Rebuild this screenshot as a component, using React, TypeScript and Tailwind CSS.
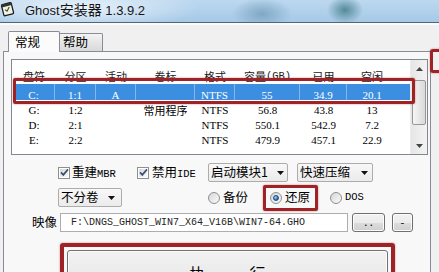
import React from 'react';
import clsx from 'clsx';

const cjk = "font-['Noto_Sans_CJK_SC',sans-serif]";
const mono = "font-['Liberation_Mono',monospace]";
const serif = "font-['Liberation_Serif','Noto_Sans_CJK_SC',serif]";
const winBtn =
  'rounded-[3px] border border-[#707070] bg-[linear-gradient(to_bottom,#f2f2f2_0%,#ebebeb_50%,#dddddd_51%,#cfcfcf_100%)] shadow-[inset_0_0_0_1px_#fcfcfc]';
const redBox = 'border-[#9d2327] shadow-[0_0_2px_rgba(157,35,39,0.6)]';

const columns = [
  { title: '盘符', w: 'w-[42px]' },
  { title: '分区', w: 'w-[41px]' },
  { title: '活动', w: 'w-[40px]' },
  { title: '卷标', w: 'w-[59px]' },
  { title: '格式', w: 'w-[40px]' },
  { title: '容量', sub: '(GB)', w: 'w-[65px]' },
  { title: '已用', w: 'w-[47px]' },
  { title: '空闲', w: 'w-[50px]' },
];

const rows = [
  ['C:', '1:1', 'A', '', 'NTFS', '55', '34.9', '20.1'],
  ['G:', '1:2', '', '常用程序', 'NTFS', '56.8', '43.8', '13'],
  ['D:', '2:1', '', '', 'NTFS', '550.1', '542.9', '7.2'],
  ['E:', '2:2', '', '', 'NTFS', '479.9', '457.1', '22.9'],
];

function AppIcon() {
  return (
    <svg width="15" height="16" viewBox="0 0 15 16" className="shrink-0">
      <g transform="rotate(-14 7.5 8)">
        <rect x="2.5" y="2.5" width="10" height="11.5" rx="1.2" fill="#f3f1e4" stroke="#1b1b1b" strokeWidth="1.3" />
        <rect x="2.5" y="2.5" width="10" height="2.6" fill="#333" />
        <path d="M5 8.2l1.6 1.8 3-3.6" fill="none" stroke="#2f5b34" strokeWidth="1.2" />
      </g>
    </svg>
  );
}

function Check() {
  return (
    <span className="relative flex h-[12px] w-[12px] shrink-0 items-center justify-center border border-[#8e8f8f] bg-white">
      <span className="absolute inset-[1px] bg-gradient-to-br from-[#d8d8d8] to-[#fbfbfb]" />
      <svg className="relative" width="9" height="9" viewBox="0 0 9 9">
        <path d="M1 4.4l2.3 2.5L8 1.4" fill="none" stroke="#3d4f74" strokeWidth="1.7" />
      </svg>
    </span>
  );
}

function Radio({ checked = false }: { checked?: boolean }) {
  return (
    <span className="flex h-[12px] w-[12px] shrink-0 items-center justify-center rounded-full border border-[#8e8f8f] bg-gradient-to-br from-[#d6d6d6] to-[#fbfbfb]">
      {checked && (
        <span className="h-[6px] w-[6px] rounded-full border border-[#1b4f8a] bg-[radial-gradient(circle_at_35%_35%,#a6d6ff,#1d5fa3_75%)]" />
      )}
    </span>
  );
}

function Combo({ label, className }: { label: string; className: string }) {
  return (
    <div
      className={clsx(
        'flex h-[19px] items-center justify-between rounded-[2px] border border-[#acacac] bg-gradient-to-b from-[#f8f8f8] to-[#ebebeb] pl-[2px]',
        className,
      )}
    >
      <span className="leading-none">{label}</span>
      <svg width="7" height="4" viewBox="0 0 7 4">
        <path d="M0 0h7L3.5 4z" fill="#111" />
      </svg>
    </div>
  );
}

function ScrollBar() {
  return (
    <div className="flex w-[17px] flex-col border-l border-[#ececec] bg-gradient-to-r from-[#e6e6e6] to-[#f3f3f3]">
      <div className="flex h-[17px] items-center justify-center">
        <svg width="7" height="4" viewBox="0 0 7 4">
          <path d="M0 4h7L3.5 0z" fill="#444" />
        </svg>
      </div>
      <div className="flex-1 px-[1px] pt-[3px]">
        <div className="h-[45px] rounded-[2px] border border-[#979797] bg-gradient-to-r from-[#f6f6f6] to-[#d9d9d9]" />
      </div>
      <div className="flex h-[17px] items-center justify-center">
        <svg width="7" height="4" viewBox="0 0 7 4">
          <path d="M0 0h7L3.5 4z" fill="#444" />
        </svg>
      </div>
    </div>
  );
}

function ListView() {
  return (
    <div className="relative ml-[7px] mt-[7px] flex h-[96px] w-[417px] border border-[#828790] bg-white">
      <div className="flex w-[398px] flex-col pl-[1px]">
        <div className={clsx('flex h-[24px] items-end pb-[2px] text-[11px] text-[#1a1a1a]', cjk)}>
          {columns.map((c) => (
            <div key={c.title} className={clsx('flex justify-center leading-[11px]', c.w)}>
              {c.title}
              {c.sub && <span className={clsx('text-[10.5px]', mono)}>{c.sub}</span>}
            </div>
          ))}
        </div>
        {rows.map((r, i) => (
          <div
            key={r[0]}
            className={clsx(
              'flex text-[11px] leading-[11px]',
              i === 0 ? 'h-[16px] bg-[#3c8fe0] pt-[6px] text-white' : 'h-[15px] pt-[5px] text-black',
            )}
          >
            {r.map((cell, j) => (
              <div
                key={j}
                className={clsx(
                  'flex justify-center',
                  columns[j].w,
                  /[\u4e00-\u9fff]/.test(cell) ? cjk : serif,
                  i === 0 && j < 7 && '-mt-[6px] border-r border-[#82b7ec] pt-[6px]',
                )}
              >
                {cell}
              </div>
            ))}
          </div>
        ))}
      </div>
      <div className="flex-1" />
      <ScrollBar />
      <div className={clsx('absolute left-[1px] top-[18px] h-[26px] w-[402px] rounded-[2px] border-[3px]', redBox)} />
    </div>
  );
}

function TitleBar() {
  return (
    <div className="flex h-[22px] items-start bg-[radial-gradient(ellipse_120px_22px_at_80px_8px,rgba(236,244,251,0.95),rgba(236,244,251,0)),radial-gradient(ellipse_30px_16px_at_262px_14px,#80a8c5,rgba(128,168,197,0)),radial-gradient(ellipse_18px_14px_at_345px_10px,#548a98,rgba(84,138,152,0)),linear-gradient(to_bottom,#bcd8ef,#a6c9e7)] pt-[1px]">
      <AppIcon />
      <div className="ml-[10px] mt-[1px] font-['Liberation_Sans','Noto_Sans_CJK_SC',sans-serif] text-[13px] leading-[14px] text-[#151515]">
        Ghost<span className={clsx('text-[14px] leading-[14px]', cjk)}>安装器</span> 1.3.9.2
      </div>
    </div>
  );
}

export default function App() {
  return (
    <div className={clsx('relative h-[272px] w-[439px] overflow-hidden bg-[#f0f0f0] text-black', cjk)}>
      <TitleBar />
      <div className="h-[1px] bg-[#52657a]" />
      <div className="h-[2px] bg-[#fbfbfb]" />

      <div className="relative z-10 mt-[6px] flex h-[21px] items-end pl-[8px] text-[12.5px] leading-none">
        <div className="flex h-[21px] w-[52px] items-center rounded-t-[2px] border border-b-0 border-[#898c95] bg-[#fbfbfb] pl-[6px]">
          常规
        </div>
        <div className="mb-[1px] flex h-[18px] w-[43px] items-center rounded-tr-[2px] border border-b-0 border-l-0 border-[#898c95] bg-gradient-to-b from-[#f3f3f3] to-[#d9d9d9] pl-[3px]">
          帮助
        </div>
      </div>

      <div className="-mt-[1px] ml-[3px] h-[240px] w-[428px] border border-[#898c95] bg-[#f8f8f8] text-[12.5px]">
        <ListView />

        <div className="ml-[54px] mt-[8px] flex h-[19px] items-center">
          <div className="flex w-[79px] items-center">
            <Check />
            <span className="ml-[2px] leading-none">
              重建<span className={clsx('text-[10.5px]', mono)}>MBR</span>
            </span>
          </div>
          <div className="flex w-[71px] items-center">
            <Check />
            <span className="ml-[3px] leading-none">
              禁用<span className={clsx('text-[10.5px]', mono)}>IDE</span>
            </span>
          </div>
          <Combo label="启动模块1" className="w-[80px] pr-[3px]" />
          <Combo label="快速压缩" className="ml-[9px] w-[76px] pr-[4px]" />
        </div>

        <div className="ml-[54px] mt-[6px] flex h-[19px] items-center">
          <Combo label="不分卷" className="w-[64px] pr-[6px]" />
          <div className="ml-[86px] flex w-[62px] items-center">
            <Radio />
            <span className="ml-[3px] leading-none">备份</span>
          </div>
          <div className="relative flex w-[60px] items-center">
            <Radio checked />
            <span className="ml-[3px] leading-none">还原</span>
            <div className={clsx('absolute -left-[7px] -top-[6px] h-[26px] w-[55px] rounded-[2px] border-[3px]', redBox)} />
          </div>
          <div className="flex items-center">
            <Radio />
            <span className={clsx('ml-[3px] text-[10.5px] leading-none', mono)}>DOS</span>
          </div>
        </div>

        <div className="ml-[28px] mt-[6px] flex h-[19px] items-center">
          <span className="w-[28px] leading-none">映像</span>
          <div className={clsx('flex h-[19px] w-[288px] items-center border border-[#abadb3] bg-white pl-[10px] text-[10px] text-[#222]', mono)}>
            F:\DNGS_GHOST_WIN7_X64_V16B\WIN7-64.GHO
          </div>
          <div className={clsx('ml-[4px] flex h-[19px] w-[33px] items-center justify-center pb-[3px] text-[11px] leading-none', winBtn)}>
            . .
          </div>
          <div className={clsx('ml-[7px] flex h-[19px] w-[21px] items-center justify-center text-[11px] leading-none', winBtn)}>
            -
          </div>
        </div>

        <div className={clsx('ml-[56px] mt-[11px] w-[335px] rounded-[3px] border-[4px] p-[3px]', redBox)}>
          <div className={clsx('flex h-[46px] items-center justify-center gap-[44px] text-[16px] leading-none', winBtn)}>
            <span>执</span>
            <span>行</span>
          </div>
        </div>
      </div>

      <div className={clsx('absolute left-[430px] top-[49px] h-[24px] w-[20px] rounded-[3px] border-[3px]', redBox)} />
    </div>
  );
}
